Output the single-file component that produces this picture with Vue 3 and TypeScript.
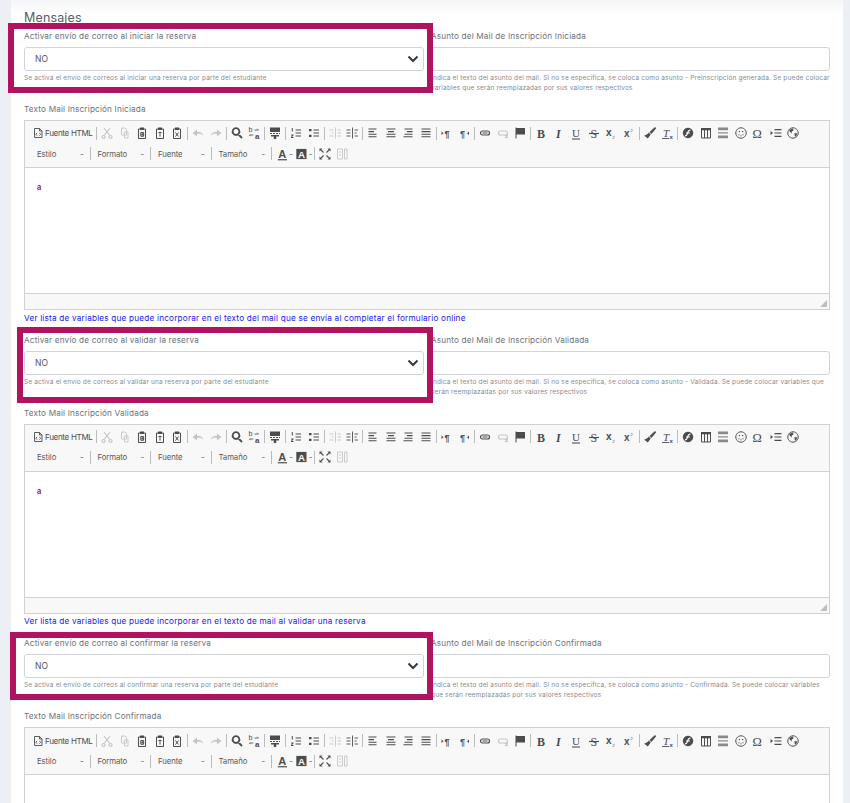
<script setup lang="ts">
type Glyph = { x: number; y: number; c: string; size?: number; weight?: number; italic?: boolean; fill?: string; family?: string }
type Icon = { f?: string; s?: string; w?: number; off?: boolean; muted?: boolean; t?: Glyph[]; white?: string }
type Item = { kind: 'sep' } | { kind: 'src' } | { kind: 'btn'; name: string } | { kind: 'combo'; label: string } | { kind: 'color'; name: string }

const clip = 'M4.500 4h7v9.500h-7z'
const icons: Record<string, Icon> = {
  source: { s: 'M4.500 3.500h5l2.500 2.500v6.500h-7.500z M9.500 3.500v2.500h2.500 M7 8l-1.200 1.300L7 10.600 M9.500 8l1.200 1.300-1.200 1.300', w: .9 },
  cut: { off: true, s: 'M5 3l5.500 7 M11 3l-5.500 7 M4.500 10.500a1.500 1.500 0 1 0 .01 0z M11.500 10.500a1.500 1.500 0 1 0 .01 0z', w: 1.200 },
  copy: { off: true, s: 'M4.500 3h3.500l1.500 1.500V10H4.500z M7.500 7H11v6H7.500z', w: .9 },
  paste: { s: clip + ' M6.800 7.500h2.800v3.800H6.800z', f: 'M6 2.500h4V5H6z M7.500 8.500h1.500v2H7.500z', w: 1 },
  pastetext: { s: clip + ' M6.500 7.500h3 M8 7.500v4', f: 'M6 2.500h4V5H6z', w: 1 },
  pasteword: { s: clip + ' M6.500 7.500l3 4 M9.500 7.500l-3 4', f: 'M6 2.500h4V5H6z', w: 1 },
  undo: { off: true, f: 'M2.500 8l4.500-3.500v2.300c3 0 5.500 1 6.500 3.700-2-1.700-4-2-6.500-1.500v2.500z' },
  redo: { off: true, f: 'M13.500 8L9 4.500v2.300c-3 0-5.500 1-6.500 3.700 2-1.700 4-2 6.500-1.500v2.500z' },
  find: { s: 'M7 3.200a3.400 3.400 0 1 0 .01 0z M9.500 9.500l3.500 3.500', w: 1.800 },
  replace: { s: 'M8.500 5h4l-1.200-1.200 M7.500 10H3.500l1.200 1.200', w: .8, t: [{ x: 2.500, y: 7, c: 'b', size: 7 }, { x: 9, y: 14, c: 'a', size: 8, weight: 700 }] },
  template: { f: 'M3 2.500h10v4.500H3z M3 8h2v1H3z M6 8h2v1H6z M9 8h2v1H9z M12 8h1v1h-1z M4 10h8v1.500H4z M6.800 11.500h2.400V14H6.800z' },
  ol: { s: 'M7.500 5h5.500 M7.500 8h5.500 M7.500 11h5.500', w: 1, f: 'M3.800 3h1v3.500h-1z M3 9.500h2.500v1L4 12h1.500v1H3v-1l1.500-1.500H3z' },
  ul: { s: 'M7.500 5h5.500 M7.500 8h5.500 M7.500 11h5.500', w: 1, f: 'M3 4h2.500v2.300H3z M3 9.800h2.500v2.300H3z' },
  outdent: { off: true, s: 'M8.500 2.500v11 M2.500 5h4 M4.500 8h2 M2.500 11h4 M10.500 5h3.500 M10.500 8h3.500 M10.500 11h3.500', w: .9 },
  indent: { s: 'M8.500 2.500v11 M2.500 5h4 M2.500 8h4 M2.500 11h4 M10.500 5h3.500 M10.500 8h2 M10.500 11h3.500', w: .9 },
  left: { s: 'M3.500 4h8 M3.500 6.600h5.500 M3.500 9.200h8 M3.500 11.800h8', w: 1.100 },
  center: { s: 'M3.500 4h9 M5 6.600h6 M3.500 9.200h9 M3.500 11.800h9', w: 1.100 },
  right: { s: 'M4.500 4h8 M7 6.600h5.500 M4.500 9.200h8 M3.500 11.800h9', w: 1.100 },
  justify: { s: 'M3.500 4h9 M3.500 6.600h9 M3.500 9.200h9 M3.500 11.800h9', w: 1.100 },
  ltr: { f: 'M2.500 6.500v3.500l2-1.700z', t: [{ x: 5.500, y: 11.500, c: '¶', size: 9, weight: 700 }] },
  rtl: { f: 'M13 6.500v3.500l-2-1.700z', t: [{ x: 4, y: 11.500, c: '¶', size: 9, weight: 700 }] },
  link: { s: 'M5.500 6h5a2 2 0 0 1 0 4h-5a2 2 0 0 1 0-4z M5.500 8h5', w: 1.200 },
  unlink: { off: true, s: 'M5.500 6h5a2 2 0 0 1 0 4h-5a2 2 0 0 1 0-4z M10 10l3 3 M13 10l-3 3', w: 1.100 },
  flag: { f: 'M3.500 2.500h1v11h-1z M4.500 3h8.500v6.500H4.500z' },
  bold: { t: [{ x: 4, y: 12.500, c: 'B', size: 12, weight: 700, family: 'Liberation Serif' }] },
  italic: { t: [{ x: 5, y: 12.500, c: 'I', size: 12, weight: 700, italic: true, family: 'Liberation Serif' }] },
  underline: { s: 'M4 14h8', w: 1.100, t: [{ x: 4, y: 12, c: 'U', size: 11, weight: 400, family: 'Liberation Serif' }] },
  strike: { s: 'M3 8.500h10', w: 1.100, t: [{ x: 4.500, y: 12.500, c: 'S', size: 12, weight: 400, family: 'Liberation Serif' }] },
  sub: { t: [{ x: 3, y: 10.500, c: 'x', size: 10, weight: 700 }, { x: 9.500, y: 13.500, c: '2', size: 4 }] },
  sup: { t: [{ x: 3, y: 12, c: 'x', size: 10, weight: 700 }, { x: 9.500, y: 6.500, c: '2', size: 4 }] },
  brush: { f: 'M13 2l1.200 1.200-4.700 5.800-2-2z M6.800 7.500l2 2-3 4L2 10.500c1.800-.2 3.500-1.300 4.800-3z' },
  clear: { s: 'M3 13.500h7', w: .9, t: [{ x: 4, y: 11.500, c: 'T', size: 11, weight: 400, italic: true, family: 'Liberation Serif' }, { x: 10.500, y: 13.500, c: 'x', size: 6, weight: 700 }] },
  flash: { f: 'M8 2.800a5.200 5.200 0 1 0 .01 0z', white: 'M10.500 5.200C8 5.200 8 7 7.500 8.500S6.500 10.800 5 10.800 M6 8h4' },
  table: { f: 'M3 3h10v2.300H3z', s: 'M3.500 5v8h9V5 M6.500 5v8 M9.500 5v8', w: 1 },
  hr: { muted: true, f: 'M3 2.500h10v2.800H3z M3 7.200h10v1.400H3z M3 10.500h10v2.800H3z' },
  smiley: { s: 'M8 2.800a5.200 5.200 0 1 0 .01 0z', w: 1, f: 'M5.800 6h1.200v1.200H5.800z M9 6h1.200v1.200H9z M5.500 9.300h1v1h-1z M7.500 10.200h1v1h-1z M9.500 9.300h1v1h-1z' },
  omega: { t: [{ x: 2.500, y: 13, c: 'Ω', size: 12.500, weight: 400, family: 'Liberation Serif' }] },
  showlist: { f: 'M2.500 6v4l2.500-2z M6.500 4h7v1.300h-7z M6.500 10.700h7V12h-7z', s: 'M6.500 8h7', w: 1 },
  globe: { s: 'M8 2.800a5.200 5.200 0 1 0 .01 0z', w: 1, f: 'M5 4.500L8 3.500l.5 2-2 1 .5 2-2-1.500-.8-1.300z M9.500 8l2.800.5-1.300 3.200-1.300-.7z' },
  maximize: { s: 'M4 4l2.500 2.500 M12 4L9.500 6.500 M4 12l2.500-2.500 M12 12L9.500 9.500', w: 1.100, f: 'M2.500 2.500h3L2.500 5.500z M13.500 2.500h-3l3 3z M2.500 13.500h3l-3-3z M13.500 13.500h-3l3-3z' },
  blocks: { off: true, s: 'M3.500 3h5v10h-5z M10.500 3h2.500v10h-2.500z M5 6h2 M5 9h2', w: .9 },
  fore: { s: 'M3 14.200h10', w: 1.300, t: [{ x: 3.500, y: 12, c: 'A', size: 12, weight: 700, family: 'Liberation Sans' }] },
  back: { f: 'M2.500 2.500h11v11h-11z', t: [{ x: 4.300, y: 12, c: 'A', size: 10.500, weight: 700, fill: '#f8f8f8', family: 'Liberation Sans' }] },
}

const btn = (name: string): Item => ({ kind: 'btn', name })
const sep: Item = { kind: 'sep' }
const row1: Item[] = [
  { kind: 'src' }, sep,
  ...['cut', 'copy', 'paste', 'pastetext', 'pasteword'].map(btn), sep,
  btn('undo'), btn('redo'), sep,
  btn('find'), btn('replace'), sep,
  btn('template'), sep,
  btn('ol'), btn('ul'), sep,
  btn('outdent'), btn('indent'), sep,
  ...['left', 'center', 'right', 'justify'].map(btn), sep,
  btn('ltr'), btn('rtl'), sep,
  btn('link'), btn('unlink'), btn('flag'), sep,
  ...['bold', 'italic', 'underline', 'strike', 'sub', 'sup'].map(btn), sep,
  btn('brush'), btn('clear'), sep,
  ...['flash', 'table', 'hr', 'smiley', 'omega', 'showlist', 'globe'].map(btn),
]
const row2: Item[] = [
  { kind: 'combo', label: 'Estilo' }, sep,
  { kind: 'combo', label: 'Formato' }, sep,
  { kind: 'combo', label: 'Fuente' }, sep,
  { kind: 'combo', label: 'Tamaño' }, sep,
  { kind: 'color', name: 'fore' }, { kind: 'color', name: 'back' }, sep,
  btn('maximize'), btn('blocks'),
]

const tail = 'se coloca como asunto - '
const base = 'Indica el texto del asunto del mail. Si no se específica, ' + tail
const sections = [
  {
    activate: 'Activar envío de correo al iniciar la reserva',
    hint: 'Se activa el envío de correos al iniciar una reserva por parte del estudiante',
    subject: 'Asunto del Mail de Inscripción Iniciada',
    lines: [base + 'Preinscripción generada. Se puede colocar', 'variables que serán reemplazadas por sus valores respectivos'],
    editor: 'Texto Mail Inscripción Iniciada',
    body: 'a',
    link: 'Ver lista de variables que puede incorporar en el texto del mail que se envía al completar el formulario online',
    frame: { left: '-16px', top: '-6.700px', width: '425px', height: '70px' },
  },
  {
    activate: 'Activar envío de correo al validar la reserva',
    hint: 'Se activa el envío de correos al validar una reserva por parte del estudiante',
    subject: 'Asunto del Mail de Inscripción Validada',
    lines: [base + 'Validada. Se puede colocar variables que', 'serán reemplazadas por sus valores respectivos'],
    editor: 'Texto Mail Inscripción Validada',
    body: 'a',
    link: 'Ver lista de variables que puede incorporar en el texto de mail al validar una reserva',
    frame: { left: '-7px', top: '-7px', width: '416px', height: '76.500px' },
  },
  {
    activate: 'Activar envío de correo al confirmar la reserva',
    hint: 'Se activa el envío de correos al confirmar una reserva por parte del estudiante',
    subject: 'Asunto del Mail de Inscripción Confirmada',
    lines: [base + 'Confirmada. Se puede colocar variables', 'que serán reemplazadas por sus valores respectivos'],
    editor: 'Texto Mail Inscripción Confirmada',
    body: '',
    link: '',
    frame: { left: '-14px', top: '-5.700px', width: '422.500px', height: '68.500px' },
  },
]
</script>

<template>
  <div class="page">
    <main class="card">
      <h2 class="title">Mensajes</h2>
      <section v-for="sec in sections" :key="sec.editor" class="section">
        <div class="frame" :style="sec.frame"></div>
        <div class="fields">
          <div>
            <div class="label">{{ sec.activate }}</div>
            <div class="control">
              <span>NO</span>
              <svg class="chev" viewBox="0 0 12 8" width="12" height="8"><path d="M1.500 1.500L6 6l4.500-4.500" /></svg>
            </div>
            <div class="help">{{ sec.hint }}</div>
          </div>
          <div>
            <div class="label">{{ sec.subject }}</div>
            <div class="control"></div>
            <div v-for="line in sec.lines" :key="line" class="help">{{ line }}</div>
          </div>
        </div>
        <div class="label ed-label">{{ sec.editor }}</div>
        <div class="editor">
          <div class="toolbar">
            <div v-for="(row, ri) in [row1, row2]" :key="ri" class="tb-row">
              <template v-for="(item, i) in row" :key="i">
                <span v-if="item.kind === 'sep'" class="sep"></span>
                <span v-else-if="item.kind === 'combo'" class="combo"><span>{{ item.label }}</span><i>-</i></span>
                <span v-else :class="item.kind === 'src' ? 'src' : item.kind === 'color' ? 'color' : 'btn'">
                  <svg
                    viewBox="0 0 16 16"
                    width="16"
                    height="16"
                    :class="{
                      off: icons[item.kind === 'src' ? 'source' : item.name].off,
                      muted: icons[item.kind === 'src' ? 'source' : item.name].muted,
                    }"
                  >
                    <template v-for="ic in [icons[item.kind === 'src' ? 'source' : item.name]]" :key="0">
                      <path v-if="ic.f" :d="ic.f" class="fill" />
                      <path v-if="ic.s" :d="ic.s" class="stroke" :stroke-width="ic.w || 1" />
                      <path v-if="ic.white" :d="ic.white" class="white" />
                      <text
                        v-for="g in ic.t || []"
                        :key="g.c + g.x"
                        :x="g.x"
                        :y="g.y"
                        :font-size="g.size"
                        :font-weight="g.weight"
                        :font-style="g.italic ? 'italic' : 'normal'"
                        :font-family="g.family || 'Liberation Sans'"
                        :fill="g.fill || 'currentColor'"
                      >{{ g.c }}</text>
                    </template>
                  </svg>
                  <em v-if="item.kind === 'src'">Fuente HTML</em>
                  <i v-if="item.kind === 'color'">-</i>
                </span>
              </template>
            </div>
          </div>
          <div class="content"><span>{{ sec.body }}</span></div>
          <div class="status"><span class="grip"></span></div>
        </div>
        <a v-if="sec.link" class="link">{{ sec.link }}</a>
      </section>
    </main>
  </div>
</template>

<style>
html, body { margin: 0; height: 803px; overflow: hidden; background: #eceff3; }
</style>

<style scoped>
.page { height: 803px; overflow: hidden; padding: 0 7px 0 11px; box-sizing: border-box; font-family: Inter, "Noto Sans", sans-serif; }
.card { height: 803px; background: linear-gradient(#f5f6f7, #fff 15px); padding: 9px 13px 0 13px; box-sizing: border-box; }
.title { margin: 0 0 3px; height: 18px; line-height: 18px; font-size: 12.500px; font-weight: 400; color: #595e66; letter-spacing: .15px; }
.section { position: relative; height: 303.670px; }
.frame { position: absolute; box-sizing: border-box; border: 6px solid #b2135f; z-index: 3; pointer-events: none; }
.fields { display: grid; grid-template-columns: 400px 399px; column-gap: 7px; height: 73px; }
.label { height: 12px; line-height: 12px; font-size: 8.200px; color: #6c727b; white-space: nowrap; letter-spacing: .16px; }
.control { height: 24px; margin-top: 5px; box-sizing: border-box; border: 1px solid #d0d4da; border-radius: 3px; background: #fff; display: flex; align-items: center; justify-content: space-between; padding: 0 4px 0 10px; font-size: 8.500px; color: #50555c; }
.chev { fill: none; stroke: #343a40; stroke-width: 2; }
.help { height: 10px; line-height: 10px; font-size: 6.500px; color: #858a92; white-space: nowrap; position: relative; top: 1px; letter-spacing: .17px; }
.help:nth-of-type(3) { margin-top: 1px; }
.ed-label { margin-bottom: 5px; }
.editor { width: 806px; height: 190px; box-sizing: border-box; border: 1px solid #d1d1d1; display: flex; flex-direction: column; }
.toolbar { height: 47px; flex: none; box-sizing: border-box; background: #f8f8f8; border-bottom: 1px solid #d1d1d1; padding: 2px 0 0 5px; }
.tb-row { display: flex; align-items: center; height: 20.500px; color: #4c4c4c; }
.sep { width: 1px; height: 13px; background: #bcbcbc; margin: 0 1.250px; flex: none; }
.btn { width: 17.500px; display: flex; justify-content: center; flex: none; }
.src { width: 64.750px; display: flex; align-items: center; flex: none; }
.src em { font-style: normal; font-size: 8px; margin-left: -1px; white-space: nowrap; letter-spacing: -.3px; }
.combo { width: 57px; flex: none; display: flex; justify-content: space-between; padding: 0 5px 0 5.500px; box-sizing: border-box; font-size: 7.800px; color: #5a5a5a; letter-spacing: -.1px; }
.combo:first-child { width: 58.500px; padding-left: 7px; }
.combo i, .color i { font-style: normal; font-size: 8px; color: #5a5a5a; }
.color { width: 19.500px; display: flex; align-items: center; flex: none; padding-left: 1px; box-sizing: border-box; }
svg.off { color: #c6c6c6; }
svg.muted { color: #8a8a8a; }
.fill { fill: currentColor; }
.stroke { fill: none; stroke: currentColor; }
.white { fill: none; stroke: #f8f8f8; stroke-width: 1.200; }
.content { flex: 1; background: #fff; padding: 15px 12px; font-size: 7.500px; line-height: 10px; color: #a01030; font-weight: 600; }
.status { height: 16px; flex: none; box-sizing: border-box; background: #f8f8f8; border-top: 1px solid #d1d1d1; position: relative; }
.grip { position: absolute; right: 2px; bottom: 2px; width: 0; height: 0; border-left: 7px solid transparent; border-bottom: 7px solid #bdbdbd; }
.link { display: block; height: 12px; margin-top: 1.500px; line-height: 12px; font-size: 8.200px; color: #2020f0; white-space: nowrap; letter-spacing: .2px; }
</style>
